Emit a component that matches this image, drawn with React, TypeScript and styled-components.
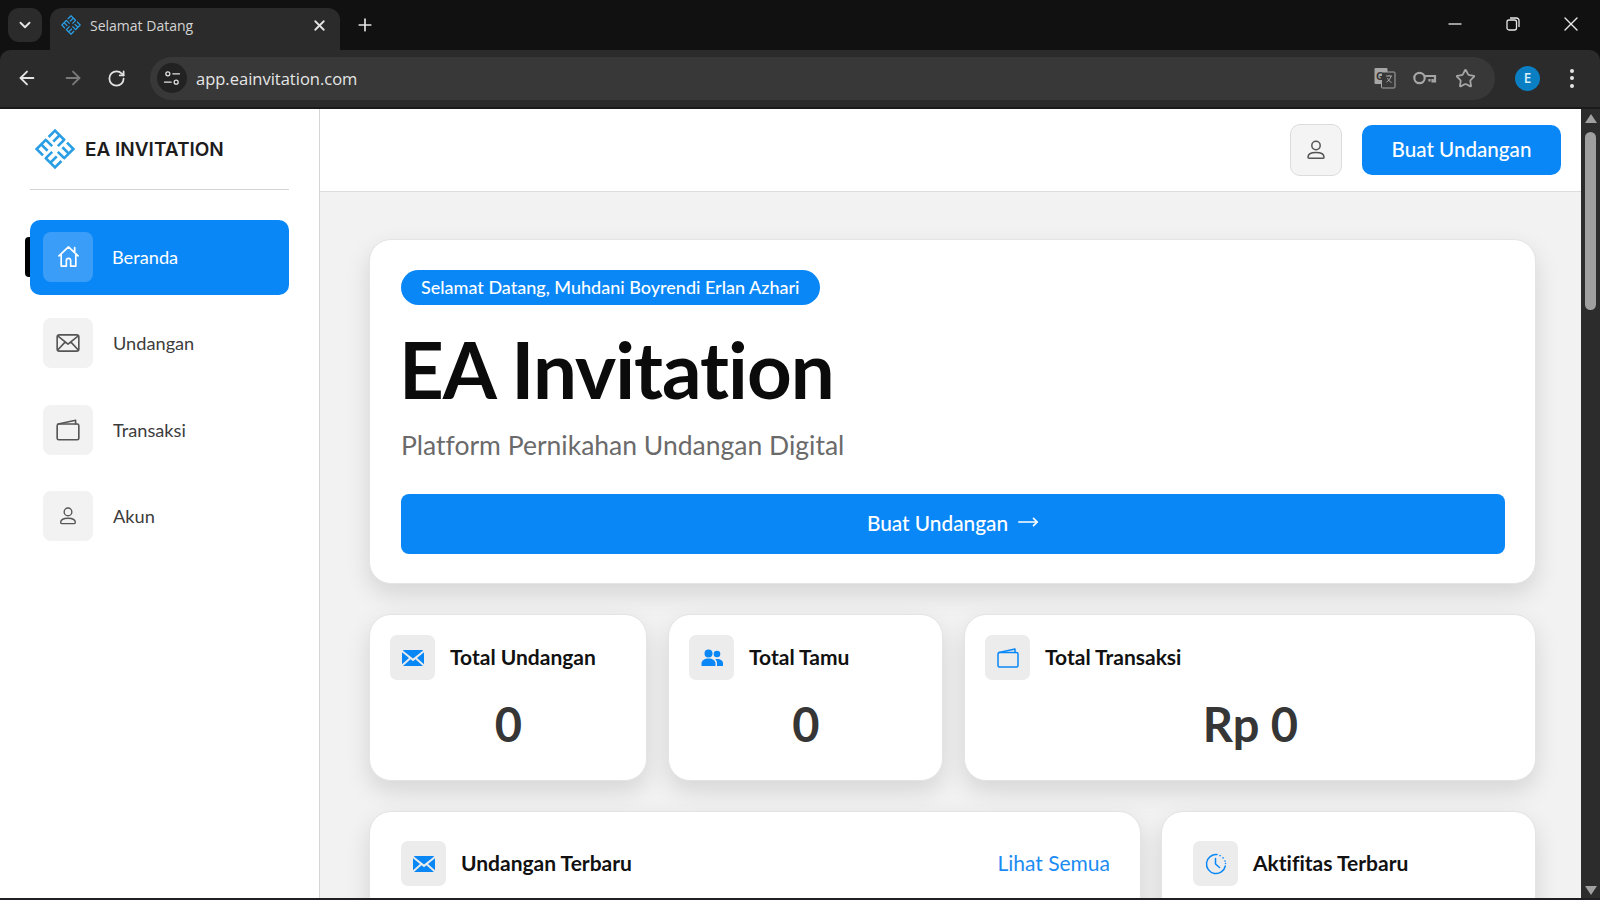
import { ReactNode } from 'react';
import styled, { createGlobalStyle } from 'styled-components';
import { ArrowLeft, ArrowRight, ChevronDown, MoveRight, Plus, RotateCw, Star, X } from 'lucide-react';

const BLUE = '#0a87f7';

const GlobalStyle = createGlobalStyle`
	html, body, #root {
		margin: 0;
		height: 100%;
		overflow: hidden;
	}
	body {
		font-family: Lato, "Noto Sans", sans-serif;
		font-variant-ligatures: none;
		background: #111;
	}
	* {
		box-sizing: border-box;
	}
`;

const Page = styled.div`
	width: 1600px;
	height: 900px;
	display: flex;
	flex-direction: column;
	background: #111;
	overflow: hidden;
`;

/* browser chrome */
const TabStrip = styled.div`
	height: 50px;
	flex: none;
	display: flex;
	align-items: flex-end;
	padding-left: 8px;
	color: #e4e4e4;
`;

const TabListButton = styled.div`
	width: 34px;
	height: 34px;
	margin-bottom: 8px;
	border-radius: 11px;
	background: #2b2b2b;
	display: flex;
	align-items: center;
	justify-content: center;
`;

const Tab = styled.div`
	width: 290px;
	height: 42px;
	margin-left: 8px;
	padding: 0 12px 8px 11px;
	background: #2b2b2b;
	border-radius: 12px 12px 0 0;
	display: flex;
	align-items: center;
`;

const TabTitle = styled.span`
	flex: 1;
	margin-left: 9px;
	font-family: "Open Sans", sans-serif;
	font-size: 14px;
	color: #d4d4d4;
`;

const NewTab = styled.div`
	width: 36px;
	height: 42px;
	margin-left: 7px;
	padding-bottom: 8px;
	display: flex;
	align-items: center;
	justify-content: center;
`;

const WindowControls = styled.div`
	margin-left: auto;
	height: 50px;
	display: flex;
	align-items: center;
	padding-bottom: 2px;
`;

const WindowButton = styled.div`
	width: 58px;
	display: flex;
	justify-content: center;
`;

const Toolbar = styled.div`
	height: 59px;
	flex: none;
	background: #2b2b2b;
	border-radius: 10px 10px 0 0;
	border-bottom: 2px solid #1a1a1a;
	display: flex;
	align-items: center;
	padding-bottom: 1px;
	color: #e4e4e4;
`;

const NavGroup = styled.div`
	width: 150px;
	padding-left: 16px;
	display: flex;
	gap: 23.5px;
	align-items: center;
`;

const Omnibox = styled.div`
	width: 1345px;
	height: 43px;
	border-radius: 22px;
	background: #383838;
	display: flex;
	align-items: center;
	padding: 0 19px 0 7px;
`;

const SiteInfo = styled.div`
	width: 30px;
	height: 30px;
	border-radius: 50%;
	background: #222;
	display: flex;
	align-items: center;
	justify-content: center;
`;

const Url = styled.span`
	flex: 1;
	margin-left: 9px;
	font-family: "Open Sans", sans-serif;
	font-size: 16.5px;
	color: #e6e6e6;
`;

const OmniIcons = styled.div`
	display: flex;
	align-items: center;
	gap: 17px;
	color: #a6a6a6;
`;

const Avatar = styled.div`
	width: 25px;
	height: 25px;
	margin-left: 20px;
	border-radius: 50%;
	background: #0b7fc4;
	color: #d8f0ff;
	font-family: "Open Sans", sans-serif;
	font-size: 13.5px;
	font-weight: 600;
	display: flex;
	align-items: center;
	justify-content: center;
`;

const MenuDots = styled.div`
	margin-left: 30px;
	display: flex;
	flex-direction: column;
	gap: 3.5px;
	span {
		width: 4px;
		height: 4px;
		border-radius: 50%;
		background: #e4e4e4;
	}
`;

/* app */
const Viewport = styled.div`
	flex: 1;
	min-height: 0;
	display: flex;
	background: #f2f2f2;
	border-bottom: 2px solid #1f2024;
`;

const Sidebar = styled.aside`
	width: 320px;
	flex: none;
	background: #fff;
	border-right: 1px solid #d6d6d6;
	padding: 0 30px;
`;

const Brand = styled.div`
	height: 81px;
	margin-bottom: 30px;
	padding-left: 5px;
	border-bottom: 1px solid #d4d4d4;
	display: flex;
	align-items: center;
	gap: 10px;
`;

const BrandName = styled.span`
	font-family: Inter, sans-serif;
	font-size: 19px;
	font-weight: 600;
	color: #1c1c1c;
`;

const NavList = styled.nav`
	display: flex;
	flex-direction: column;
	gap: 11.5px;
`;

const NavItem = styled.a<{ $active?: boolean }>`
	position: relative;
	height: 75px;
	padding: 0 13px 2px;
	border-radius: 10px;
	display: flex;
	align-items: center;
	gap: ${(p) => (p.$active ? '19px' : '20px')};
	background: ${(p) => (p.$active ? BLUE : 'transparent')};
	color: ${(p) => (p.$active ? '#fff' : '#3c3c3c')};
	font-size: 18.2px;

	${(p) =>
		p.$active &&
		`&::before {
			content: '';
			position: absolute;
			left: -5px;
			top: 17px;
			width: 5px;
			height: 40px;
			background: #000;
			border-radius: 4px 0 0 4px;
		}`}
`;

const NavIcon = styled.span<{ $active?: boolean }>`
	width: 50px;
	height: 50px;
	border-radius: 8px;
	display: flex;
	align-items: center;
	justify-content: center;
	background: ${(p) => (p.$active ? '#3a9ef9' : '#f2f2f2')};
	color: ${(p) => (p.$active ? '#fff' : '#555')};
`;

const Main = styled.main`
	flex: 1;
	min-width: 0;
	overflow: hidden;
`;

const TopBar = styled.header`
	height: 83px;
	background: #fff;
	border-bottom: 1px solid #dcdcdc;
	display: flex;
	align-items: center;
	justify-content: flex-end;
	gap: 20px;
	padding: 0 20px 1px 0;
`;

const ProfileButton = styled.button`
	width: 52px;
	height: 52px;
	padding: 0;
	background: #f4f4f4;
	border: 1px solid #dcdcdc;
	border-radius: 10px;
	color: #555;
	display: flex;
	align-items: center;
	justify-content: center;
`;

const CreateButton = styled.button`
	width: 199px;
	height: 50px;
	padding: 0 0 2px;
	border: 0;
	border-radius: 10px;
	background: ${BLUE};
	color: #fff;
	font-family: inherit;
	font-size: 20.6px;
	font-weight: 500;
`;

const Content = styled.div`
	padding: 47px 45px 0 49px;
	display: flex;
	flex-direction: column;
	gap: 30px;
`;

const Card = styled.section`
	background: #fff;
	border: 1px solid #e4e4e4;
	border-radius: 22px;
	box-shadow: 0 10px 24px rgba(0, 0, 0, 0.12);
`;

const Hero = styled(Card)`
	height: 345px;
	padding: 30px 30px 0 31px;
`;

const Greeting = styled.span`
	display: inline-block;
	height: 35px;
	line-height: 34px;
	padding: 0 20px;
	border-radius: 18px;
	background: ${BLUE};
	color: #fff;
	font-size: 18px;
	font-weight: 500;
`;

const HeroTitle = styled.h1`
	margin: 16px 0 0 -2px;
	font-size: 78px;
	line-height: 96px;
	letter-spacing: -1px;
	font-weight: 700;
	color: #0b0b0b;
`;

const HeroSub = styled.p`
	margin: 10px 0 0;
	font-size: 26.5px;
	line-height: 36px;
	color: #6a6a6a;
`;

const HeroButton = styled.button`
	width: 100%;
	height: 60px;
	margin-top: 31px;
	padding: 0 0 4px;
	border: 0;
	border-radius: 8px;
	background: ${BLUE};
	color: #fff;
	font-family: inherit;
	font-size: 20.8px;
	font-weight: 500;
	display: flex;
	align-items: center;
	justify-content: center;
	gap: 9px;
`;

const StatsRow = styled.div`
	display: grid;
	grid-template-columns: 278px 275px 1fr;
	gap: 21px;
`;

const StatCard = styled(Card)`
	height: 167px;
	padding: 20px 19px 20px 20px;
`;

const CardHead = styled.div`
	display: flex;
	align-items: center;
	gap: 15px;
`;

const CardIcon = styled.span`
	width: 45px;
	height: 45px;
	flex: none;
	border-radius: 7px;
	background: #ececec;
	color: ${BLUE};
	display: flex;
	align-items: center;
	justify-content: center;
`;

const CardTitle = styled.span`
	margin-top: -2px;
	font-size: 21px;
	font-weight: 700;
	color: #111;
`;

const StatValue = styled.div`
	margin-top: 16px;
	text-align: center;
	font-size: 47px;
	line-height: 56px;
	font-weight: 700;
	color: #363636;
`;

const PanelRow = styled.div`
	display: grid;
	grid-template-columns: 772px 1fr;
	gap: 20px;
`;

const Panel = styled(Card)`
	height: 200px;
	padding: 29px 30px 29px 31px;
	border-radius: 22px 22px 0 0;
`;

const PanelLink = styled.a`
	margin-left: auto;
	margin-top: -2px;
	font-size: 21px;
	color: #1c8cf2;
`;

const Scrollbar = styled.div`
	width: 19px;
	flex: none;
	background: #2c2c2c;
	padding: 5px 4px 3px;
	display: flex;
	flex-direction: column;
	align-items: center;
	justify-content: space-between;
`;

const ScrollArrow = styled.span<{ $down?: boolean }>`
	width: 0;
	height: 0;
	border-left: 6px solid transparent;
	border-right: 6px solid transparent;
	${(p) => (p.$down ? 'border-top: 9px solid #a0a0a0;' : 'border-bottom: 9px solid #a0a0a0;')}
`;

const ScrollThumb = styled.div`
	width: 11px;
	height: 178px;
	margin-top: 9px;
	margin-bottom: auto;
	border-radius: 6px;
	background: #9f9f9f;
`;

/* drawings */
const Svg = ({ size, children, fill }: { size: number; children: ReactNode; fill?: string }) => (
	<svg
		width={size}
		height={size}
		viewBox="0 0 24 24"
		fill={fill || 'none'}
		stroke={fill ? 'none' : 'currentColor'}
		strokeWidth={1.5}
		strokeLinecap="round"
		strokeLinejoin="round"
	>
		{children}
	</svg>
);

const LogoMark = ({ size }: { size: number }) => (
	<svg width={size} height={size} viewBox="0 0 40 40" fill="none" stroke="#2a9ee4" strokeWidth={2.6}>
		<g transform="rotate(45 20 20)">
			{[0, 90, 180, 270].map((r) => (
				<path key={r} transform={`rotate(${r} 20 20)`} d="M7 16V7H21M13.500 16V7M20 16V7" />
			))}
		</g>
	</svg>
);

const HomeIcon = () => (
	<Svg size={27}>
		<path d="M3.500 11.500 12 3.500l8.500 8M5.500 10v10.500h4.600v-5a1.900 1.900 0 0 1 3.800 0v5h4.600V10M17.500 4v4" />
	</Svg>
);

const MailLine = () => (
	<Svg size={26}>
		<rect x="2" y="4.500" width="20" height="15" rx="2" />
		<path d="M2.500 5.500 12 13l9.500-7.500M2.500 18.500 9.500 11M21.500 18.500 14.500 11" />
	</Svg>
);

const WalletLine = ({ size }: { size: number }) => (
	<Svg size={size}>
		<rect x="2" y="6.500" width="20" height="14.500" rx="1.500" />
		<path d="M3 6.500 19 3v3.500" />
	</Svg>
);

const PersonLine = ({ size }: { size: number }) => (
	<Svg size={size}>
		<circle cx="12" cy="7.500" r="4.200" />
		<path d="M4 19.200c0-3 3.400-4.700 8-4.700s8 1.700 8 4.700c0 .7-.5 1.100-1.200 1.100H5.200c-.7 0-1.200-.4-1.200-1.100z" />
	</Svg>
);

const MailSolid = () => (
	<Svg size={24} fill="currentColor">
		<path d="M3 4h18c.5 0 .9.2 1.200.5L12 12.600 1.800 4.500C2.100 4.200 2.500 4 3 4zM1 6.300 8 12l-7 6.300V6.300zM23 6.300V18.300L16 12l7-5.700zM9.500 13.200 12 15.200l2.500-2L22 20H2l7.500-6.800z" />
	</Svg>
);

const UsersSolid = () => (
	<Svg size={24} fill="currentColor">
		<circle cx="8.500" cy="7.500" r="4" />
		<circle cx="17" cy="8" r="3.300" />
		<path d="M1.500 20v-2.500c0-3 3-5 7-5s7 2 7 5V20h-14zM17 20v-2.800c0-1.600-.6-3-1.800-4 .7-.2 1.300-.3 2-.3 3.300 0 5.800 1.700 5.800 4.200V20h-6z" />
	</Svg>
);

const ClockDotted = () => (
	<Svg size={24}>
		<path d="M13 2.600A9.500 9.500 0 1 0 21.300 14" />
		<path d="M16 3.600l.2.100M19 5.800l.1.100M21 9l.1.200M21.500 11.500v.1" strokeDasharray="1 1" />
		<path d="M11.500 6.500V12l4 3.500" />
	</Svg>
);

const TuneIcon = () => (
	<Svg size={20}>
		<circle cx="7" cy="7" r="2.400" />
		<path d="M13 7h8M3 17h8" />
		<circle cx="17" cy="17" r="2.400" />
	</Svg>
);

const TranslateIcon = () => (
	<svg width="22" height="22" viewBox="0 0 22 22">
		<rect x="0.500" y="1" width="13" height="16" rx="1" fill="#a6a6a6" />
		<rect x="7.500" y="5" width="13.500" height="16" rx="1" fill="#383838" stroke="#a6a6a6" />
		<text x="2" y="13" fontSize="10" fontWeight="700" fontFamily="Open Sans, sans-serif" fill="#333">G</text>
		<path d="M12 9h6M15 8v1M17 9c-.6 3-2.500 5-4.500 6M13.500 11c.8 2 2 3.400 4 4.500" stroke="#a6a6a6" fill="none" />
	</svg>
);

const KeyIcon = () => (
	<svg width="25" height="14" viewBox="0 0 25 14" fill="none" stroke="#a6a6a6" strokeWidth="2.200">
		<circle cx="6.500" cy="7" r="5.200" />
		<path d="M11.700 5H22v5.500h-2.500V8M16.500 8v2.500" />
	</svg>
);

const RestoreIcon = () => (
	<svg width="14" height="14" viewBox="0 0 14 14" fill="none" stroke="#e8e8e8" strokeWidth="1.300">
		<rect x="1" y="3" width="9.500" height="10" rx="2" />
		<path d="M4 1h6.500A2.500 2.500 0 0 1 13 3.500V10" />
	</svg>
);

const MinimizeIcon = () => (
	<svg width="14" height="14" viewBox="0 0 14 14" stroke="#e8e8e8" strokeWidth="1.300">
		<path d="M0.500 7h13" />
	</svg>
);

const App = () => {
	return (
		<Page>
			<GlobalStyle />
			<TabStrip>
				<TabListButton>
					<ChevronDown size={18} strokeWidth={2.5} />
				</TabListButton>
				<Tab>
					<LogoMark size={20} />
					<TabTitle>Selamat Datang</TabTitle>
					<X size={17} strokeWidth={2.5} />
				</Tab>
				<NewTab>
					<Plus size={20} strokeWidth={2} />
				</NewTab>
				<WindowControls>
					<WindowButton>
						<MinimizeIcon />
					</WindowButton>
					<WindowButton>
						<RestoreIcon />
					</WindowButton>
					<WindowButton>
						<X size={24} color="#e8e8e8" strokeWidth={1.4} />
					</WindowButton>
				</WindowControls>
			</TabStrip>
			<Toolbar>
				<NavGroup>
					<ArrowLeft size={22} strokeWidth={2} />
					<ArrowRight size={22} strokeWidth={2} color="#7a7a7a" />
					<RotateCw size={19} strokeWidth={2.2} />
				</NavGroup>
				<Omnibox>
					<SiteInfo>
						<TuneIcon />
					</SiteInfo>
					<Url>app.eainvitation.com</Url>
					<OmniIcons>
						<TranslateIcon />
						<KeyIcon />
						<Star size={21} strokeWidth={2} />
					</OmniIcons>
				</Omnibox>
				<Avatar>E</Avatar>
				<MenuDots>
					<span />
					<span />
					<span />
				</MenuDots>
			</Toolbar>
			<Viewport>
				<Sidebar>
					<Brand>
						<LogoMark size={40} />
						<BrandName>EA INVITATION</BrandName>
					</Brand>
					<NavList>
						<NavItem $active>
							<NavIcon $active>
								<HomeIcon />
							</NavIcon>
							Beranda
						</NavItem>
						<NavItem>
							<NavIcon>
								<MailLine />
							</NavIcon>
							Undangan
						</NavItem>
						<NavItem>
							<NavIcon>
								<WalletLine size={26} />
							</NavIcon>
							Transaksi
						</NavItem>
						<NavItem>
							<NavIcon>
								<PersonLine size={22} />
							</NavIcon>
							Akun
						</NavItem>
					</NavList>
				</Sidebar>
				<Main>
					<TopBar>
						<ProfileButton>
							<PersonLine size={24} />
						</ProfileButton>
						<CreateButton>Buat Undangan</CreateButton>
					</TopBar>
					<Content>
						<Hero>
							<Greeting>Selamat Datang, Muhdani Boyrendi Erlan Azhari</Greeting>
							<HeroTitle>EA Invitation</HeroTitle>
							<HeroSub>Platform Pernikahan Undangan Digital</HeroSub>
							<HeroButton>
								Buat Undangan <MoveRight size={22} strokeWidth={1.8} />
							</HeroButton>
						</Hero>
						<StatsRow>
							<StatCard>
								<CardHead>
									<CardIcon>
										<MailSolid />
									</CardIcon>
									<CardTitle>Total Undangan</CardTitle>
								</CardHead>
								<StatValue>0</StatValue>
							</StatCard>
							<StatCard>
								<CardHead>
									<CardIcon>
										<UsersSolid />
									</CardIcon>
									<CardTitle>Total Tamu</CardTitle>
								</CardHead>
								<StatValue>0</StatValue>
							</StatCard>
							<StatCard>
								<CardHead>
									<CardIcon>
										<WalletLine size={24} />
									</CardIcon>
									<CardTitle>Total Transaksi</CardTitle>
								</CardHead>
								<StatValue>Rp 0</StatValue>
							</StatCard>
						</StatsRow>
						<PanelRow>
							<Panel>
								<CardHead>
									<CardIcon>
										<MailSolid />
									</CardIcon>
									<CardTitle>Undangan Terbaru</CardTitle>
									<PanelLink>Lihat Semua</PanelLink>
								</CardHead>
							</Panel>
							<Panel>
								<CardHead>
									<CardIcon>
										<ClockDotted />
									</CardIcon>
									<CardTitle>Aktifitas Terbaru</CardTitle>
								</CardHead>
							</Panel>
						</PanelRow>
					</Content>
				</Main>
				<Scrollbar>
					<ScrollArrow />
					<ScrollThumb />
					<ScrollArrow $down />
				</Scrollbar>
			</Viewport>
		</Page>
	);
};

export default App;
